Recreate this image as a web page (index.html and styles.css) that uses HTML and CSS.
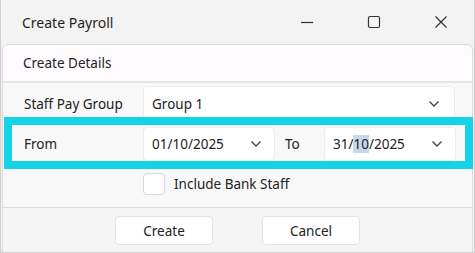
FILE: index.html
```html
<!DOCTYPE html>
<html lang="en">
<head>
  <meta charset="UTF-8" />
  <title>Create Payroll</title>
  <link rel="stylesheet" href="styles.css">
</head>
<body>

  <div class="window">
    <div class="titlebar">
      <span class="title">Create Payroll</span>
      <div class="controls">
        <span class="ctl">
          <svg width="14" height="14" viewBox="0 0 14 14"><path d="M1 7.5h12" stroke="#333" stroke-width="1.2"/></svg>
        </span>
        <span class="ctl">
          <svg width="14" height="14" viewBox="0 0 14 14"><rect x="1.5" y="1.5" width="11" height="11" rx="1.5" fill="none" stroke="#333" stroke-width="1.2"/></svg>
        </span>
        <span class="ctl">
          <svg width="14" height="14" viewBox="0 0 14 14"><path d="M1.5 1.5l11 11M12.5 1.5l-11 11" stroke="#333" stroke-width="1.2"/></svg>
        </span>
      </div>
    </div>

    <div class="dialog">
      <div class="section-head">Create Details</div>

      <div class="form">
        <div class="row">
          <label class="lbl">Staff Pay Group</label>
          <div class="combo wide">
            <span>Group 1</span>
            <svg class="chev" width="12" height="8" viewBox="0 0 12 8"><path d="M1.5 1.5l4.5 4.5 4.5-4.5" fill="none" stroke="#444" stroke-width="1.3"/></svg>
          </div>
        </div>

        <div class="row">
          <label class="lbl">From</label>
          <div class="combo date">
            <span>01/10/2025</span>
            <svg class="chev" width="12" height="8" viewBox="0 0 12 8"><path d="M1.5 1.5l4.5 4.5 4.5-4.5" fill="none" stroke="#444" stroke-width="1.3"/></svg>
          </div>
          <label class="lbl-to">To</label>
          <div class="combo date">
            <span>31/<span class="sel">10</span>/2025</span>
            <svg class="chev" width="12" height="8" viewBox="0 0 12 8"><path d="M1.5 1.5l4.5 4.5 4.5-4.5" fill="none" stroke="#444" stroke-width="1.3"/></svg>
          </div>
        </div>

        <div class="row check-row">
          <span class="checkbox"></span>
          <span>Include Bank Staff</span>
        </div>
      </div>

      <div class="actions">
        <button class="btn">Create</button>
        <button class="btn">Cancel</button>
      </div>
    </div>

    <!-- highlight box drawn over the date row -->
    <div class="highlight"></div>
  </div>

</body>
</html>
```

FILE: styles.css
```css
body {
  margin: 0;
  font-family: "Noto Sans", "Open Sans", sans-serif;
  font-size: 13.5px;
  color: #222;
  background: #f3f3f3;
}
.window {
  position: relative;
  width: 475px;
  height: 253px;
  box-sizing: border-box;
  border: 1px solid #cfcfcf;
  border-top: none;
  background: #f3f3f3;
  overflow: hidden;
}
.titlebar {
  height: 44px;
  display: flex;
  align-items: center;
  justify-content: space-between;
  padding-left: 21px;
}
.title {
  font-size: 14px;
  color: #1f1f1f;
}
.controls {
  display: flex;
}
.ctl {
  width: 67px;
  height: 44px;
  display: flex;
  align-items: center;
  justify-content: center;
}
.dialog {
  margin: 0 1px;
  background: #f8f8f8;
  border: 1px solid #dcdcdc;
  border-bottom: none;
  border-radius: 6px 6px 0 0;
}
.section-head {
  height: 36px;
  display: flex;
  align-items: center;
  padding-left: 20px;
  background: #fdfbfd;
  border-bottom: 2px solid #e6e6e6;
  border-radius: 6px 6px 0 0;
}
.form {
  display: flex;
  flex-direction: column;
  gap: 6px;
  padding: 3px 16px 0 21px;
  border-bottom: 1px solid #dedede;
}
.row {
  display: flex;
  align-items: center;
}
.lbl {
  width: 119px;
}
.lbl-to {
  width: 49px;
  padding-left: 10px;
  box-sizing: border-box;
}
.combo {
  height: 35px;
  box-sizing: border-box;
  background: #fff;
  border: 1px solid #ececec;
  border-radius: 4px;
  display: flex;
  align-items: center;
  justify-content: space-between;
  padding: 0 14px 0 8px;
}
.combo.wide {
  width: 312px;
}
.combo.date {
  width: 132px;
  height: 34px;
  padding-right: 12px;
}
.sel {
  background: #c4d9ee;
}
.check-row {
  padding: 6px 0 12px 119px;
  gap: 9px;
}
.checkbox {
  width: 22px;
  height: 22px;
  box-sizing: border-box;
  background: #fff;
  border: 1px solid #d6d6d6;
  border-radius: 4px;
}
.actions {
  display: flex;
  justify-content: center;
  gap: 49px;
  padding: 8px 0 9px;
  background: #f5f5f5;
}
.btn {
  width: 98px;
  height: 29px;
  font-family: inherit;
  font-size: 13.5px;
  color: #222;
  background: #fff;
  border: 1px solid #e3e3e3;
  border-radius: 4px;
}
.highlight {
  position: absolute;
  left: 3px;
  top: 117px;
  width: 469px;
  height: 52px;
  box-sizing: border-box;
  border: 8px solid #14d3e6;
  pointer-events: none;
}
```
